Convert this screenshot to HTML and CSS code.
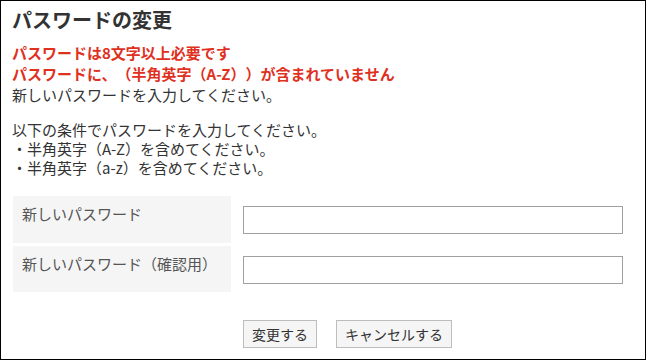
FILE: index.html
```html
<!DOCTYPE html>
<html lang="ja">
<head>
<meta charset="utf-8">
<title>パスワードの変更</title>
<link rel="stylesheet" href="styles.css">
</head>
<body>
<div class="page">
  <h1 class="title">パスワードの変更</h1>
  <div class="errors">
    <div class="error">パスワードは8文字以上必要です</div>
    <div class="error">パスワードに、（半角英字（A-Z））が含まれていません</div>
  </div>
  <p class="lead">新しいパスワードを入力してください。</p>
  <div class="rules">
    <div>以下の条件でパスワードを入力してください。</div>
    <div>・半角英字（A-Z）を含めてください。</div>
    <div>・半角英字（a-z）を含めてください。</div>
  </div>
  <form class="form">
    <div class="label">新しいパスワード</div>
    <div class="field"><input class="input" type="password"></div>
    <div class="label">新しいパスワード（確認用）</div>
    <div class="field"><input class="input" type="password"></div>
    <div class="actions">
      <button class="btn" type="button">変更する</button>
      <button class="btn" type="button">キャンセルする</button>
    </div>
  </form>
</div>
</body>
</html>
```
FILE: styles.css
```css
html, body {
  margin: 0;
  padding: 0;
  background: #fff;
}
body {
  font-family: "Noto Sans CJK JP", "Noto Sans", sans-serif;
  color: #333;
  text-spacing-trim: space-all;
}
.page {
  box-sizing: border-box;
  width: 646px;
  height: 360px;
  border: 1px solid #000;
  padding: 5px 0 0 11px;
}
.title {
  margin: 0;
  font-size: 20px;
  line-height: 28px;
  font-weight: bold;
  color: #333;
}
.errors {
  margin-top: 8px;
}
.error {
  font-size: 15px;
  line-height: 21px;
  font-weight: bold;
  color: #e0301e;
}
.lead {
  margin: 0;
  font-size: 15px;
  line-height: 21px;
}
.rules {
  margin-top: 15px;
  font-size: 15px;
  line-height: 19px;
}
.form {
  margin: 19px 0 0 1px;
  display: grid;
  grid-template-columns: 218px 380px;
  grid-template-rows: 47px 46px auto;
  column-gap: 12px;
  row-gap: 3px;
}
.label {
  background: #f5f5f5;
  padding: 7px 0 0 9px;
  font-size: 15px;
  line-height: 21px;
  color: #555;
}
.field {
  padding-top: 10px;
}
.input {
  display: block;
  box-sizing: border-box;
  width: 380px;
  height: 28px;
  margin: 0;
  border: 1px solid #a0a0a0;
  background: #fff;
  padding: 0 4px;
}
.actions {
  grid-column: 2;
  margin-top: 25px;
  display: flex;
  gap: 19px;
}
.btn {
  box-sizing: border-box;
  height: 28px;
  margin: 0;
  padding: 0 8px;
  border: 1px solid #bdbdbd;
  background: #f5f5f5;
  font-family: "Noto Sans CJK JP", "Noto Sans", sans-serif;
  font-size: 14px;
  line-height: 26px;
  color: #333;
  text-spacing-trim: space-all;
}
```
